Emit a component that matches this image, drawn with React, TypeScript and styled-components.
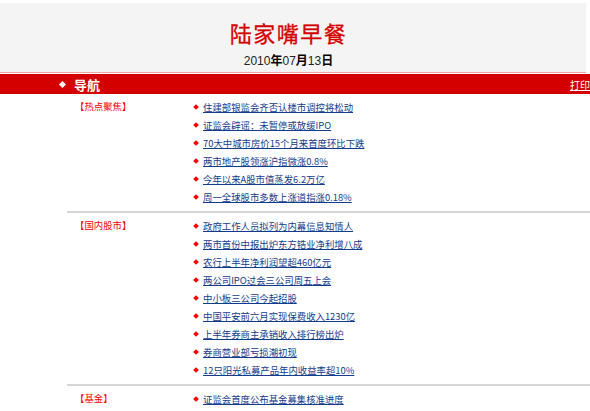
import React from 'react';
import styled, { createGlobalStyle } from 'styled-components';

const GlobalStyle = createGlobalStyle`
    html, body {
        margin: 0;
        padding: 0;
        background: #ffffff;
        font-family: "Noto Sans CJK SC", "Liberation Sans", sans-serif;
    }
`;

const colors = {
    red: '#d40000',
    label: '#ff0000',
    link: '#143c8c',
    band: '#f4f4f4',
};

type Section = {
    label: string;
    items: string[];
};

const sections: Section[] = [
    {
        label: '【热点聚焦】',
        items: [
            '住建部银监会齐否认楼市调控将松动',
            '证监会辟谣：未暂停或放缓IPO',
            '70大中城市房价15个月来首度环比下跌',
            '两市地产股领涨沪指微涨0.8%',
            '今年以来A股市值蒸发6.2万亿',
            '周一全球股市多数上涨道指涨0.18%',
        ],
    },
    {
        label: '【国内股市】',
        items: [
            '政府工作人员拟列为内幕信息知情人',
            '两市首份中报出炉东方锆业净利增八成',
            '农行上半年净利润望超460亿元',
            '两公司IPO过会三公司周五上会',
            '中小板三公司今起招股',
            '中国平安前六月实现保费收入1230亿',
            '上半年券商主承销收入排行榜出炉',
            '券商营业部亏损潮初现',
            '12只阳光私募产品年内收益率超10%',
        ],
    },
    {
        label: '【基金】',
        items: ['证监会首度公布基金募集核准进度'],
    },
];

const Page = styled.div`
    width: 590px;
    overflow: hidden;
    padding-top: 3px;
`;

const Header = styled.div`
    width: 586px;
    height: 70px;
    background: ${colors.band};
    border-bottom: 1px solid #f2a4a4;
    display: flex;
    flex-direction: column;
    align-items: center;
    box-sizing: border-box;
    padding-right: 9px;
`;

const Title = styled.div`
    margin-top: 15px;
    font-size: 22px;
    line-height: 28px;
    letter-spacing: 1.5px;
    color: ${colors.red};
    -webkit-text-stroke: 0.3px ${colors.red};
`;

const DateLine = styled.div`
    margin-top: 7px;
    font-family: "Liberation Sans", "Noto Sans CJK SC", sans-serif;
    font-size: 12px;
    line-height: 14px;
    color: #222;

    b {
        font-family: "Noto Sans CJK SC", sans-serif;
        font-weight: bold;
        color: #000;
    }
`;

const NavBar = styled.div`
    margin-top: 1px;
    height: 20px;
    background: ${colors.red};
    display: flex;
    align-items: center;
    justify-content: space-between;
    color: #fff;
`;

const NavTitle = styled.div`
    display: flex;
    align-items: center;
    gap: 9px;
    padding-left: 60px;
    font-size: 13px;
    font-weight: bold;
`;

const Diamond = styled.span<{ $size: number; $color: string }>`
    display: inline-block;
    width: ${(p) => p.$size}px;
    height: ${(p) => p.$size}px;
    background: ${(p) => p.$color};
    transform: rotate(45deg);
    flex: none;
`;

const PrintLink = styled.a`
    color: #fff;
    font-size: 10px;
    text-decoration: underline;
    white-space: nowrap;
`;

const Sections = styled.div`
    margin-left: 67px;
`;

const Row = styled.div<{ $last?: boolean }>`
    display: grid;
    grid-template-columns: 126px 1fr;
    padding: 4px 0 5px;
    border-bottom: ${(p) => (p.$last ? 'none' : '2px solid #d6d6d6')};
`;

const Label = styled.div`
    padding-left: 8px;
    font-size: 9.4px;
    line-height: 16px;
    color: ${colors.label};
    white-space: nowrap;
`;

const List = styled.ul`
    list-style: none;
    margin: 0;
    padding: 0;
`;

const Item = styled.li`
    display: flex;
    align-items: center;
    gap: 5px;
    height: 18px;
    padding-left: 1px;
`;

const ItemLink = styled.a`
    font-size: 9.4px;
    color: ${colors.link};
    text-decoration: underline;
    white-space: nowrap;
`;

const App = () => {
    return (
        <Page>
            <GlobalStyle />
            <Header>
                <Title>陆家嘴早餐</Title>
                <DateLine>
                    2010<b>年</b>07<b>月</b>13<b>日</b>
                </DateLine>
            </Header>
            <NavBar>
                <NavTitle>
                    <Diamond $size={5} $color="#fff" />
                    导航
                </NavTitle>
                <PrintLink href="#">打印</PrintLink>
            </NavBar>
            <Sections>
                {sections.map((section, i) => (
                    <Row key={section.label} $last={i === sections.length - 1}>
                        <Label>{section.label}</Label>
                        <List>
                            {section.items.map((item) => (
                                <Item key={item}>
                                    <Diamond $size={4} $color={colors.label} />
                                    <ItemLink href="#">{item}</ItemLink>
                                </Item>
                            ))}
                        </List>
                    </Row>
                ))}
            </Sections>
        </Page>
    );
};

export default App;
